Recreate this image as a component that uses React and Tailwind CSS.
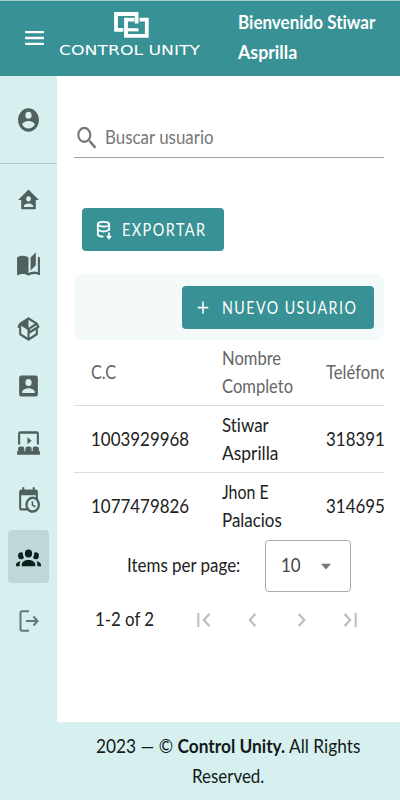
import React from 'react';

const icons = {
  account:
    'M12,19.2C9.5,19.2 7.29,17.92 6,16C6.03,14 10,12.9 12,12.9C14,12.9 17.97,14 18,16C16.71,17.92 14.5,19.2 12,19.2M12,5A3,3 0 0,1 15,8A3,3 0 0,1 12,11A3,3 0 0,1 9,8A3,3 0 0,1 12,5M12,2A10,10 0 0,0 2,12A10,10 0 0,0 12,22A10,10 0 0,0 22,12C22,6.47 17.5,2 12,2Z',
  home:
    'M12,3L2,12H5V20H19V12H22L12,3M12,8.75A2.25,2.25 0 0,1 14.25,11A2.25,2.25 0 0,1 12,13.25A2.25,2.25 0 0,1 9.75,11A2.25,2.25 0 0,1 12,8.75M12,15C13.5,15 16.5,15.75 16.5,17.25V18H7.5V17.25C7.5,15.75 10.5,15 12,15Z',
  book:
    'M19 2L14 6.5V17.5L19 13V2M6.5 5C4.55 5 2.45 5.4 1 6.5V21.16C1 21.41 1.25 21.66 1.5 21.66C1.6 21.66 1.65 21.59 1.75 21.59C3.1 20.94 5.05 20.5 6.5 20.5C8.45 20.5 10.55 20.9 12 22C13.35 21.15 15.8 20.5 17.5 20.5C19.15 20.5 20.85 20.81 22.25 21.56C22.35 21.61 22.4 21.59 22.5 21.59C22.75 21.59 23 21.34 23 21.09V6.5C22.4 6.05 21.75 5.75 21 5.5V19C19.9 18.65 18.7 18.5 17.5 18.5C15.8 18.5 13.35 19.15 12 20V6.5C10.55 5.4 8.45 5 6.5 5Z',
  box:
    'M2,10.96C1.5,10.68 1.35,10.07 1.63,9.59L3.13,7C3.24,6.8 3.41,6.66 3.6,6.58L11.43,2.18C11.59,2.06 11.79,2 12,2C12.21,2 12.41,2.06 12.57,2.18L20.47,6.62C20.66,6.72 20.82,6.88 20.91,7.08L22.36,9.6C22.64,10.08 22.47,10.69 22,10.96L21,11.54V16.5C21,16.88 20.79,17.21 20.47,17.38L12.57,21.82C12.41,21.94 12.21,22 12,22C11.79,22 11.59,21.94 11.43,21.82L3.53,17.38C3.21,17.21 3,16.88 3,16.5V10.96C2.7,11.13 2.32,11.14 2,10.96M12,4.15V10.85L17.96,7.5L12,4.15M5,15.91L11,19.29V12.58L5,9.21V15.91M19,15.91V12.69L14,15.59C13.67,15.77 13.3,15.76 13,15.6V19.29L19,15.91M13.85,13.36L20.13,9.73L19.55,8.72L13.27,12.35L13.85,13.36Z',
  badge:
    'M6,17C6,15 10,13.9 12,13.9C14,13.9 18,15 18,17V18H6M15,9A3,3 0 0,1 12,12A3,3 0 0,1 9,9A3,3 0 0,1 12,6A3,3 0 0,1 15,9M3,5V19A2,2 0 0,0 5,21H19A2,2 0 0,0 21,19V5A2,2 0 0,0 19,3H5C3.89,3 3,3.9 3,5Z',
  theater:
    'M4,15H6A2,2 0 0,1 8,17V19H9V17A2,2 0 0,1 11,15H13A2,2 0 0,1 15,17V19H16V17A2,2 0 0,1 18,15H20A2,2 0 0,1 22,17V19H23V22H1V19H2V17A2,2 0 0,1 4,15M11,7L15,10L11,13V7M4,2H20A2,2 0 0,1 22,4V13.54C21.41,13.19 20.73,13 20,13V4H4V13C3.27,13 2.59,13.19 2,13.54V4A2,2 0 0,1 4,2Z',
  calendar:
    'M15,13H16.5V15.82L18.94,17.23L18.19,18.53L15,16.69V13M19,8H5V19H9.67C9.24,18.09 9,17.07 9,16A7,7 0 0,1 16,9C17.07,9 18.09,9.24 19,9.67V8M5,21C3.89,21 3,20.1 3,19V5C3,3.89 3.89,3 5,3H6V1H8V3H16V1H18V3H19A2,2 0 0,1 21,5V11.1C22.24,12.36 23,14.09 23,16A7,7 0 0,1 16,23C14.09,23 12.36,22.24 11.1,21H5M16,11.15A4.85,4.85 0 0,0 11.15,16C11.15,18.68 13.32,20.85 16,20.85A4.85,4.85 0 0,0 20.85,16C20.85,13.32 18.68,11.15 16,11.15Z',
  group:
    'M12,5.5A3.5,3.5 0 0,1 15.5,9A3.5,3.5 0 0,1 12,12.5A3.5,3.5 0 0,1 8.5,9A3.5,3.5 0 0,1 12,5.5M5,8C5.56,8 6.08,8.15 6.53,8.42C6.38,9.85 6.8,11.27 7.66,12.38C7.16,13.34 6.16,14 5,14A3,3 0 0,1 2,11A3,3 0 0,1 5,8M19,8A3,3 0 0,1 22,11A3,3 0 0,1 19,14C17.84,14 16.84,13.34 16.34,12.38C17.2,11.27 17.62,9.85 17.47,8.42C17.92,8.15 18.44,8 19,8M5.5,18.25C5.5,16.18 8.41,14.5 12,14.5C15.59,14.5 18.5,16.18 18.5,18.25V20H5.5V18.25M0,20V18.5C0,17.11 1.89,15.94 4.45,15.6C3.86,16.28 3.5,17.22 3.5,18.25V20H0M24,20H20.5V18.25C20.5,17.22 20.14,16.28 19.55,15.6C22.11,15.94 24,17.11 24,18.5V20Z',
  menu: 'M3,6H21V8H3V6M3,11H21V13H3V11M3,16H21V18H3V16Z',
  search:
    'M9.5,3A6.5,6.5 0 0,1 16,9.5C16,11.11 15.41,12.59 14.44,13.73L14.71,14H15.5L20.5,19L19,20.5L14,15.5V14.71L13.73,14.44C12.59,15.41 11.11,16 9.5,16A6.5,6.5 0 0,1 3,9.5A6.5,6.5 0 0,1 9.5,3M9.5,5C7,5 5,7 5,9.5C5,12 7,14 9.5,14C12,14 14,12 14,9.5C14,7 12,5 9.5,5Z',
  plus: 'M19,13H13V19H11V13H5V11H11V5H13V11H19V13Z',
  down: 'M7,10L12,15L17,10H7Z',
  first: 'M18.41,16.59L13.82,12L18.41,7.41L17,6L11,12L17,18L18.41,16.59M6,6H8V18H6V6Z',
  prev: 'M15.41,16.58L10.83,12L15.41,7.41L14,6L8,12L14,18L15.41,16.58Z',
  next: 'M8.59,16.58L13.17,12L8.59,7.41L10,6L16,12L10,18L8.59,16.58Z',
  last: 'M5.59,7.41L10.18,12L5.59,16.59L7,18L13,12L7,6L5.59,7.41M16,6H18V18H16V6Z',
};

function Icon({ name, className = 'h-7 w-[25px]' }) {
  return (
    <svg viewBox="0 0 24 24" preserveAspectRatio="none" fill="currentColor" className={`block shrink-0 ${className}`}>
      <path d={icons[name]} />
    </svg>
  );
}

// Narrow single-line label that keeps its box width fixed.
function Label({ w, scale = 'scale-x-[0.915]', children, className = '' }) {
  return (
    <span className={`block whitespace-nowrap ${w}`}>
      <span className={`inline-block origin-left ${scale} ${className}`}>{children}</span>
    </span>
  );
}

function Header() {
  return (
    <header className="flex h-[76px] shrink-0 border-t border-[#a9cccc] bg-[#389194] text-white">
      <div className="ml-[22px] mt-[23px]">
        <Icon name="menu" />
      </div>
      <div className="ml-3 mt-[10px] flex w-[142px] flex-col items-center">
        <svg viewBox="0 0 38 28" className="h-7 w-[38px]" fill="none" stroke="currentColor" strokeWidth="3.8">
          <path d="M12.3 18.8H5V3H25.6V12.6" />
          <path d="M23.4 8.7H15V24.8H35.8V8.7H28.6" />
          <path d="M15 18.8H27.5" strokeWidth="3.2" />
        </svg>
        <div className="mt-[2px] h-[18px] w-[142px] whitespace-nowrap font-['DejaVu_Sans'] text-[13.5px] leading-[18px]">
          <span className="inline-block origin-left scale-x-[1.275]">CONTROL UNITY</span>
        </div>
      </div>
      <div className="ml-[37px] mt-[7px] text-[18.5px] font-bold leading-[29.5px]">
        <Label w="w-[140px]" scale="scale-x-[0.92]">Bienvenido Stiwar</Label>
        <Label w="w-[140px]" scale="scale-x-[0.96]">Asprilla</Label>
      </div>
    </header>
  );
}

function Sidebar() {
  return (
    <nav className="flex w-[57px] shrink-0 flex-col items-center bg-[#d7f0ef] text-[#4f605f]">
      <div className="flex h-[88px] w-full shrink-0 items-center justify-center border-b border-[#b3cac9]">
        <Icon name="account" />
      </div>
      <Icon name="home" className="mt-[22px] h-7 w-[25px]" />
      <Icon name="book" className="mt-[36px] h-7 w-[25px]" />
      <Icon name="box" className="mt-[37px] h-7 w-[25px]" />
      <Icon name="badge" className="mt-[29px] h-7 w-[25px]" />
      <Icon name="theater" className="mt-[29px] h-7 w-[25px]" />
      <Icon name="calendar" className="mt-[29px] h-7 w-[25px]" />
      <div className="mt-4 flex h-[53px] w-[41px] shrink-0 items-center justify-center rounded bg-[#bdd8d7] text-[#09201f]">
        <Icon name="group" className="h-7 w-[25px]" />
      </div>
      <svg
        viewBox="0 0 24 28"
        className="mt-6 h-7 w-6 shrink-0 text-[#627978]"
        fill="none"
        stroke="currentColor"
        strokeWidth="2"
      >
        <path d="M12 4.2H5Q3.5 4.2 3.5 6V22Q3.5 23.8 5 23.8H12M9 14H20M16.5 9.5L20.5 14L16.5 18.5" />
      </svg>
    </nav>
  );
}

function Cell({ className, lines }) {
  return <div className={`flex shrink-0 flex-col justify-center ${className}`}>{lines}</div>;
}

function Table() {
  return (
    <div className="w-[310px] overflow-hidden text-[18.5px] leading-[28px] text-[#222]">
      <div className="flex h-[66px] border-b border-[#ddd] pb-px text-[#666]">
        <Cell className="ml-[17px] w-[131px]" lines={<Label w="w-[110px]" scale="scale-x-[0.88]">C.C</Label>} />
        <Cell
          className="w-[104px]"
          lines={[
            <Label key="a" w="w-[80px]" scale="scale-x-[0.895]">Nombre</Label>,
            <Label key="b" w="w-[80px]" scale="scale-x-[0.895]">Completo</Label>,
          ]}
        />
        <Cell className="w-[90px]" lines={<Label w="w-[80px]" scale="scale-x-[0.9]">Teléfono</Label>} />
      </div>
      <div className="flex h-[67px] border-b border-[#ddd]">
        <Cell className="ml-[17px] w-[131px]" lines={<Label w="w-[110px]">1003929968</Label>} />
        <Cell
          className="w-[104px]"
          lines={[
            <Label key="a" w="w-[80px]">Stiwar</Label>,
            <Label key="b" w="w-[80px]" scale="scale-x-[0.94]">Asprilla</Label>,
          ]}
        />
        <Cell className="w-[58px]" lines={<Label w="w-[58px]">318391</Label>} />
      </div>
      <div className="flex h-[67px] pb-px">
        <Cell className="ml-[17px] w-[131px]" lines={<Label w="w-[110px]">1077479826</Label>} />
        <Cell
          className="w-[104px]"
          lines={[
            <Label key="a" w="w-[80px]" scale="scale-x-[0.86]">Jhon E</Label>,
            <Label key="b" w="w-[80px]">Palacios</Label>,
          ]}
        />
        <Cell className="w-[58px]" lines={<Label w="w-[58px]">314695</Label>} />
      </div>
    </div>
  );
}

export default function App() {
  return (
    <div className="flex h-[800px] w-[400px] flex-col overflow-hidden bg-white font-[Lato,sans-serif] [font-variant-ligatures:none]">
      <Header />
      <div className="flex h-[646px] shrink-0">
        <Sidebar />
        <main className="ml-[17px] w-[310px] text-[18.5px] text-[#222]">
          <div className="mt-[46px] flex h-9 items-center border-b border-[#9e9e9e] pb-[3px] text-[#777]">
            <Icon name="search" className="h-[30px] w-[26px]" />
            <Label w="ml-[5px] w-[120px]">Buscar usuario</Label>
          </div>
          <button className="ml-2 mt-[50px] flex h-[43px] w-[142px] items-center rounded bg-[#389194] text-[17px] text-white">
            <svg viewBox="0 0 16 20" className="ml-[14px] h-5 w-4" fill="none" stroke="currentColor" strokeWidth="1.8">
              <ellipse cx="7.5" cy="4.2" rx="5.7" ry="2.4" />
              <path d="M1.8 4.2V14.5Q2.2 16.5 7.5 16.7M13.2 4.2V10.5M1.8 9.2Q3 11.5 7.5 11.5T13.2 9.2" />
              <path d="M13 12.5V18M11 16L13 18.3L15 16" />
            </svg>
            <Label w="ml-[10px] w-[90px]" scale="scale-x-[0.85]" className="tracking-[1.7px]">EXPORTAR</Label>
          </button>
          <div className="mt-[23px] flex h-[66px] justify-end rounded-lg bg-[#f4fafa] pr-[10px] pt-[12px]">
            <button className="flex h-[43px] w-[192px] items-center rounded bg-[#389194] text-[17px] text-white">
              <Icon name="plus" className="ml-3 h-[21px] w-[18px]" />
              <Label w="ml-[10px] w-[140px]" scale="scale-x-[0.84]" className="tracking-[1.7px]">NUEVO USUARIO</Label>
            </button>
          </div>
          <Table />
          <div className="flex h-[52px] items-center">
            <Label w="ml-[53px] w-[138px]">Items per page:</Label>
            <div className="flex h-[52px] w-[86px] items-center rounded border border-[#aaa] text-[#444]">
              <Label w="ml-[15px] w-[32px]">10</Label>
              <Icon name="down" className="ml-[1px] h-7 w-6 text-[#777]" />
            </div>
          </div>
          <div className="mt-[14px] flex h-7 items-center">
            <Label w="ml-[21px] w-[96px]" scale="scale-x-[0.91]">1-2 of 2</Label>
            <div className="flex gap-6 text-[#bdbdbd]">
              <Icon name="first" />
              <Icon name="prev" />
              <Icon name="next" />
              <Icon name="last" />
            </div>
          </div>
        </main>
      </div>
      <footer className="flex h-[78px] shrink-0 flex-col items-center bg-[#d7f0ef] pl-[57px] pt-[10px] text-[18.5px] leading-[29.5px] text-[#121a1a]">
        <Label w="w-[266px]" scale="scale-x-[0.935]">
          2023 — © <b>Control Unity.</b> All Rights
        </Label>
        <Label w="w-[73px]">Reserved.</Label>
      </footer>
    </div>
  );
}
